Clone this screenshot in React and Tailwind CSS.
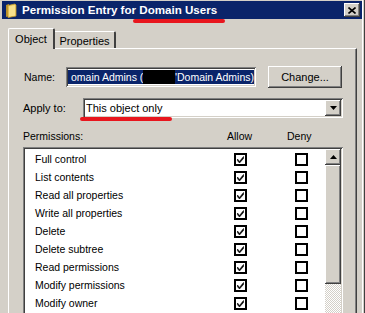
import React from "react";

const raised =
  "shadow-[inset_-1px_-1px_#404040,inset_1px_1px_#ffffff,inset_-2px_-2px_#808080,inset_2px_2px_#d4d0c8]";
const sunken =
  "shadow-[inset_1px_1px_#808080,inset_-1px_-1px_#ffffff,inset_2px_2px_#404040,inset_-2px_-2px_#d4d0c8]";

function Check({ checked }) {
  return (
    <svg width="13" height="13" viewBox="0 0 13 13" className="block">
      <rect x="1" y="1" width="11" height="11" fill="#fff" stroke="#000" strokeWidth="2" />
      {checked && (
        <path d="M3.5 6 L5.5 8.5 L9.5 3.5 L9.5 5.5 L5.5 10 L3.5 7.8 Z" fill="#000" stroke="#000" strokeWidth="0.6" />
      )}
    </svg>
  );
}

const perms = [
  "Full control",
  "List contents",
  "Read all properties",
  "Write all properties",
  "Delete",
  "Delete subtree",
  "Read permissions",
  "Modify permissions",
  "Modify owner",
];

export default function App() {
  return (
    <div
      className={`relative w-[365px] h-[313px] overflow-hidden bg-[#d4d0c8] text-black text-[10.5px] leading-none`}
      style={{ fontFamily: '"Liberation Sans", Arial, sans-serif' }}
    >
      {/* window frame right */}
      <div className="absolute right-0 top-0 h-full w-[3px] border-l border-l-white border-r border-r-[#404040] bg-[#d4d0c8]" />
      {/* Title bar */}
      <div className="ml-[2px] mr-[3px] mt-[1px] h-[18px] bg-[#0a246a] flex items-center pl-[3px] pr-[2px]">
        <svg width="12" height="15" viewBox="0 0 12 15" className="block">
          <path d="M1 2 L4 1 L4 13 L1 14 Z" fill="#b8902a" />
          <path d="M3 2.5 L10 1 L11 2 L11 13 L3 14.5 Z" fill="#f2d36b" stroke="#c49a2c" strokeWidth="0.8" />
          <path d="M4 3.5 L10 2.2 L10 12.5 L4 13.6 Z" fill="#f7e08c" />
        </svg>
        <span className="ml-[5px] text-white font-bold text-[11.6px] tracking-[0px]">
          Permission Entry for Domain Users
        </span>
        <div className={`ml-auto w-[16px] h-[14px] bg-[#d4d0c8] ${raised} flex items-center justify-center`}>
          <svg width="8" height="7" viewBox="0 0 8 7" className="block">
            <path d="M0.5 0.5 L7.5 6.5 M7.5 0.5 L0.5 6.5" stroke="#000" strokeWidth="1.6" />
          </svg>
        </div>
      </div>

      {/* Tabs + panel */}
      <div className="px-[8px] pt-[9px]">
        <div className="flex items-end h-[20px]">
          <div className="relative z-10 w-[47px] h-[21px] -mb-px bg-[#d4d0c8] border-t border-l border-white rounded-tl-[2px] rounded-tr-[2px] border-r-2 border-r-[#404040] flex items-start justify-center pt-[5px] text-[11px]">
            Object
          </div>
          <div className="w-[61px] h-[17px] bg-[#d4d0c8] border-t border-white border-r-2 border-r-[#404040] rounded-tr-[2px] flex items-start justify-center pt-[4px] text-[11px]">
            Properties
          </div>
        </div>
        <div className="w-[349px] h-[280px] border-t border-l border-white border-r border-r-[#404040] shadow-[inset_-1px_0_#808080]">
          {/* Name row */}
          <div className="mt-[17px] flex items-center h-[22px] pl-[15px]">
            <span className="w-[42px]">Name:</span>
            <div className={`w-[190px] h-[20px] bg-white ${sunken} p-[2px] flex`}>
              <div className="flex-1 bg-[#0a246a] text-white flex items-center pl-[3px] mt-[1px] mb-[1px] overflow-hidden whitespace-nowrap">
                <span>omain Admins (</span>
                <span className="inline-block w-[34px] h-[15px] bg-black" />
                <span>'Domain Admins)</span>
              </div>
            </div>
            <div className={`ml-[12px] w-[74px] h-[22px] ${raised} flex items-center justify-center text-[11px]`}>
              Change...
            </div>
          </div>

          {/* Apply to row */}
          <div className="mt-[10px] flex items-center h-[20px] pl-[14px]">
            <span className="w-[60px] text-[11px]">Apply to:</span>
            <div className={`w-[260px] h-[20px] bg-white ${sunken} flex items-center pl-[3px] pr-[2px]`}>
              <span className="text-[11px] flex-1">This object only</span>
              <div className={`w-[16px] h-[16px] bg-[#d4d0c8] ${raised} flex items-center justify-center`}>
                <svg width="7" height="4" viewBox="0 0 7 4" className="block">
                  <path d="M0 0 L7 0 L3.5 4 Z" fill="#000" />
                </svg>
              </div>
            </div>
          </div>

          {/* Permissions header */}
          <div className="mt-[11px] flex items-center h-[14px] pl-[14px]">
            <span className="w-[204px]">Permissions:</span>
            <span className="w-[60px]">Allow</span>
            <span>Deny</span>
          </div>

          {/* List */}
          <div className={`ml-[14px] mt-[4px] w-[320px] h-[200px] bg-white ${sunken} flex p-[2px]`}>
            <div className="flex-1 pt-[1px]">
              {perms.map((p) => (
                <div key={p} className="flex items-center h-[18px] pl-[10px]">
                  <span className="w-[199px] text-[10.5px]">{p}</span>
                  <Check checked />
                  <span className="w-[48px]" />
                  <Check checked={false} />
                </div>
              ))}
            </div>
            <div className="w-[16px] flex flex-col">
              <div className={`h-[16px] bg-[#d4d0c8] ${raised} flex items-center justify-center`}>
                <svg width="7" height="4" viewBox="0 0 7 4" className="block">
                  <path d="M0 4 L7 4 L3.5 0 Z" fill="#000" />
                </svg>
              </div>
              <div className={`h-[119px] bg-[#d4d0c8] ${raised}`} />
              <div className="flex-1 bg-[repeating-conic-gradient(#d4d0c8_0_25%,#ffffff_0_50%)] bg-[length:2px_2px]" />
            </div>
          </div>
        </div>
      </div>

      {/* red annotation underlines */}
      <div className="absolute left-[133px] top-[19px] w-[92px] h-[4px] rounded-full bg-[#e8161e]" />
      <div className="absolute left-[80px] top-[117px] w-[92px] h-[4px] rounded-full bg-[#e8161e]" />
    </div>
  );
}
